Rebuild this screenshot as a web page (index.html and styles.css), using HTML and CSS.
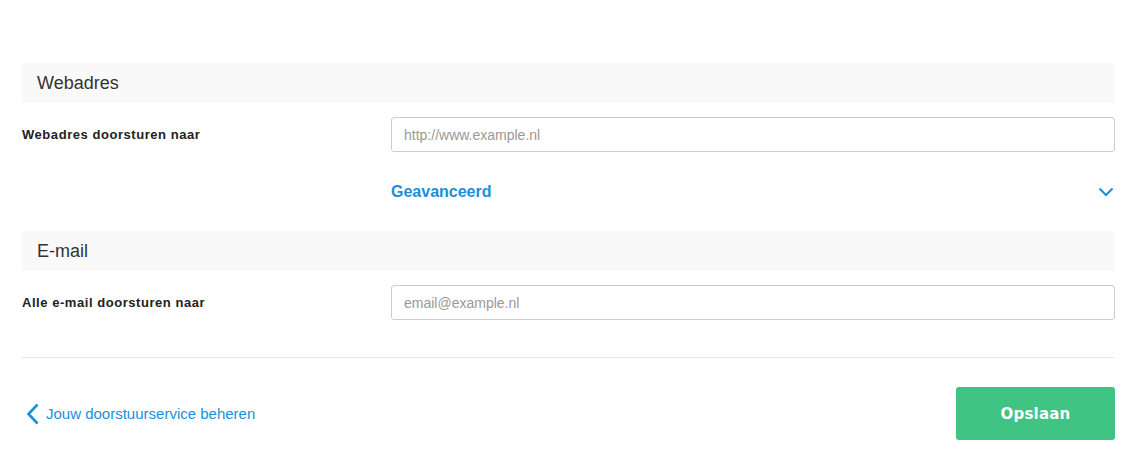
FILE: index.html
```html
<!DOCTYPE html>
<html lang="nl">
<head>
  <meta charset="UTF-8" />
  <title>Doorsturen</title>
  <link rel="stylesheet" href="styles.css">
</head>
<body>
  <div class="page">
    <div class="section-title">Webadres</div>
    <div class="row">
      <label class="row-label" for="url">Webadres doorsturen naar</label>
      <input class="field" id="url" type="text" placeholder="http://www.example.nl">
    </div>
    <div class="row">
      <div class="row-label"></div>
      <div class="advanced">
        <span>Geavanceerd</span>
        <svg class="chevron-down" width="16" height="10" viewBox="0 0 16 10">
          <path d="M1.5 1.5 L8 8 L14.5 1.5" fill="none" stroke="currentColor" stroke-width="2"/>
        </svg>
      </div>
    </div>

    <div class="section-title">E-mail</div>
    <div class="row">
      <label class="row-label" for="mail">Alle e-mail doorsturen naar</label>
      <input class="field" id="mail" type="text" placeholder="email@example.nl">
    </div>

    <div class="footer">
      <a class="back-link" href="#">
        <svg width="14" height="22" viewBox="0 0 14 22">
          <path d="M11.5 1.5 L2.5 11 L11.5 20.5" fill="none" stroke="currentColor" stroke-width="2.6"/>
        </svg>
        <span>Jouw doorstuurservice beheren</span>
      </a>
      <button class="save-btn">Opslaan</button>
    </div>
  </div>
</body>
</html>
```

FILE: styles.css
```css
:root {
  --text: #222;
  --muted: #999;
  --blue: #1a8fdc;
  --green: #40c483;
  --line: #e8e8e8;
}

* {
  box-sizing: border-box;
}

body {
  margin: 0;
  font-family: 'Liberation Sans', Arial, sans-serif;
  color: var(--text);
  background: #fff;
}

.page {
  padding: 63px 20px 0 22px;
}

.section-title {
  background: #f9f9f9;
  height: 40px;
  padding: 0 15px;
  display: flex;
  align-items: center;
  font-size: 18px;
  color: #333;
}

.row {
  display: flex;
  align-items: center;
  padding: 14px 0;
}

.row + .row {
  padding-top: 8px;
  padding-bottom: 21px;
}

.row-label {
  width: 369px;
  flex-shrink: 0;
  font-size: 13px;
  font-weight: bold;
  letter-spacing: 0.55px;
}

.field {
  flex: 1;
  height: 35px;
  border: 1px solid #ccc;
  border-radius: 3px;
  padding: 0 12px;
  font-family: inherit;
  font-size: 14px;
  color: var(--text);
}

.field::placeholder {
  color: var(--muted);
}

.advanced {
  flex: 1;
  display: flex;
  align-items: center;
  justify-content: space-between;
  height: 36px;
  font-size: 16px;
  font-weight: bold;
  color: var(--blue);
  cursor: pointer;
}

.chevron-down {
  margin-right: 1px;
}

.footer {
  margin-top: 23px;
  border-top: 1px solid var(--line);
  padding-top: 29px;
  display: flex;
  align-items: center;
  justify-content: space-between;
}

.back-link {
  display: flex;
  align-items: center;
  gap: 6px;
  padding-left: 4px;
  color: var(--blue);
  font-size: 15px;
  text-decoration: none;
}

.save-btn {
  width: 159px;
  height: 53px;
  background: var(--green);
  color: #fff;
  border: none;
  border-radius: 3px;
  font-family: 'DejaVu Sans', Verdana, sans-serif;
  font-size: 15px;
  font-weight: bold;
  letter-spacing: 0.2px;
  cursor: pointer;
}
```
